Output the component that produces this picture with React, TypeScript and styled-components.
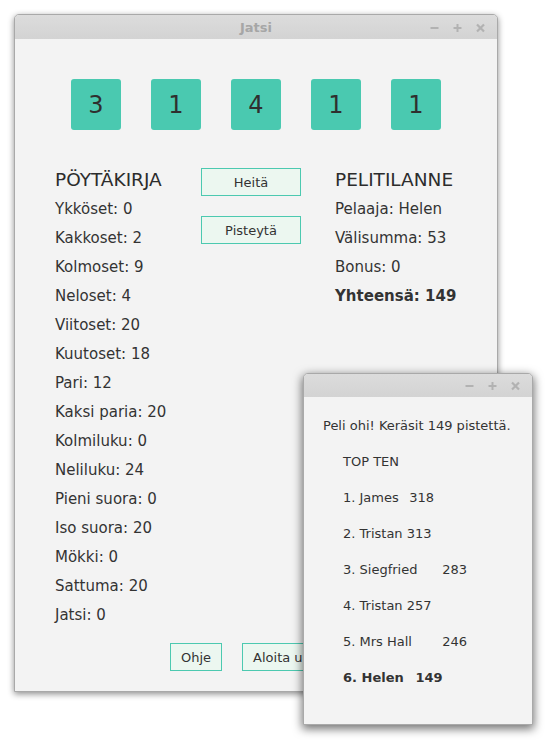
import React from "react";
import styled, { createGlobalStyle } from "styled-components";

const Global = createGlobalStyle`
  html, body { margin: 0; padding: 0; background: #ffffff; }
  body { font-family: "DejaVu Sans", "Liberation Sans", sans-serif; color: #333333; }
`;

const Desktop = styled.div`
  position: relative;
  width: 551px;
  height: 741px;
  overflow: hidden;
  background: #ffffff;
`;

const Window = styled.div<{ $left: number; $top: number; $w: number; $h: number; $strong?: boolean }>`
  position: absolute;
  left: ${(p) => p.$left}px;
  top: ${(p) => p.$top}px;
  width: ${(p) => p.$w}px;
  height: ${(p) => p.$h}px;
  box-sizing: border-box;
  display: flex;
  flex-direction: column;
  background: #f3f3f3;
  border: 1px solid #a9a9a9;
  border-radius: 5px 5px 0 0;
  box-shadow: ${(p) =>
    p.$strong
      ? "0 3px 10px 1px rgba(0,0,0,0.55)"
      : "0 2px 6px 0 rgba(0,0,0,0.45)"};
  overflow: hidden;
`;

const TitleBar = styled.div<{ $h: number }>`
  position: relative;
  flex: none;
  height: ${(p) => p.$h}px;
  background: linear-gradient(#dcdcdc, #d3d3d3);
  display: flex;
  align-items: center;
  justify-content: center;
`;

const Title = styled.span`
  font-size: 13px;
  font-weight: bold;
  color: #a6a6a6;
`;

const Controls = styled.div`
  position: absolute;
  right: 10px;
  top: 0;
  bottom: 0;
  display: flex;
  align-items: center;
  gap: 10px;
`;

const ControlIcon = styled.svg`
  width: 13px;
  height: 13px;
  display: block;
`;

const WinControls: React.FC = () => (
  <Controls>
    <ControlIcon viewBox="0 0 13 13">
      <path d="M2.5 7h8" stroke="#b2b2b2" strokeWidth="2" />
    </ControlIcon>
    <ControlIcon viewBox="0 0 13 13">
      <path d="M2.5 7h8M6.5 3v8" stroke="#b2b2b2" strokeWidth="2" />
    </ControlIcon>
    <ControlIcon viewBox="0 0 13 13">
      <path d="M3 3.5l7 7M10 3.5l-7 7" stroke="#b2b2b2" strokeWidth="2.2" />
    </ControlIcon>
  </Controls>
);

const MainBody = styled.div`
  flex: 1;
  display: flex;
  flex-direction: column;
`;

const DiceRow = styled.div`
  display: flex;
  justify-content: center;
  gap: 30px;
  margin-top: 40px;
`;

const Die = styled.div`
  width: 50px;
  height: 51px;
  border-radius: 3px;
  background: #4ac9b0;
  display: flex;
  align-items: center;
  justify-content: center;
  font-size: 24px;
  color: #2f2f2f;
`;

const Columns = styled.div`
  display: grid;
  grid-template-columns: 146px 134px 1fr;
  margin-top: 35px;
  padding-left: 40px;
`;

const Column = styled.div`
  display: flex;
  flex-direction: column;
`;

const Heading = styled.div`
  font-size: 18.5px;
  line-height: 30px;
  color: #2c2c2c;
`;

const Line = styled.div<{ $bold?: boolean }>`
  font-size: 15px;
  line-height: 29px;
  font-weight: ${(p) => (p.$bold ? "bold" : "normal")};
  color: #333333;
  white-space: nowrap;
`;

const ButtonStack = styled.div`
  display: flex;
  flex-direction: column;
  gap: 20px;
  padding-top: 3px;
`;

const Button = styled.button<{ $w?: number }>`
  box-sizing: border-box;
  height: 28px;
  width: ${(p) => (p.$w ? `${p.$w}px` : "auto")};
  padding: 0 10px;
  border: 1px solid #4cc9b0;
  border-radius: 0;
  background: #ecf7f0;
  font-family: "DejaVu Sans", "Liberation Sans", sans-serif;
  font-size: 13px;
  color: #333333;
  white-space: nowrap;
`;

const BottomBar = styled.div`
  display: flex;
  gap: 20px;
  margin-top: 13px;
  padding-left: 155px;
`;

const DialogBody = styled.div`
  padding: 11px 0 0 19px;
  display: flex;
  flex-direction: column;
`;

const DialogLine = styled.div<{ $indent?: boolean; $bold?: boolean }>`
  font-size: 13px;
  line-height: 36px;
  padding-left: ${(p) => (p.$indent ? 20 : 0)}px;
  font-weight: ${(p) => (p.$bold ? "bold" : "normal")};
  white-space: pre;
  tab-size: 8;
  color: #333333;
`;

const dice = [3, 1, 4, 1, 1];

const scores: [string, number][] = [
  ["Ykköset", 0],
  ["Kakkoset", 2],
  ["Kolmoset", 9],
  ["Neloset", 4],
  ["Viitoset", 20],
  ["Kuutoset", 18],
  ["Pari", 12],
  ["Kaksi paria", 20],
  ["Kolmiluku", 0],
  ["Neliluku", 24],
  ["Pieni suora", 0],
  ["Iso suora", 20],
  ["Mökki", 0],
  ["Sattuma", 20],
  ["Jatsi", 0],
];

const topTen: [string, number][] = [
  ["1. James", 318],
  ["2. Tristan", 313],
  ["3. Siegfried", 283],
  ["4. Tristan", 257],
  ["5. Mrs Hall", 246],
];

export default function App() {
  return (
    <>
      <Global />
      <Desktop>
        <Window $left={14} $top={14} $w={484} $h={678}>
          <TitleBar $h={24}>
            <Title>Jatsi</Title>
            <WinControls />
          </TitleBar>
          <MainBody>
            <DiceRow>
              {dice.map((d, i) => (
                <Die key={i}>{d}</Die>
              ))}
            </DiceRow>
            <Columns>
              <Column>
                <Heading>PÖYTÄKIRJA</Heading>
                {scores.map(([n, v]) => (
                  <Line key={n}>
                    {n}: {v}
                  </Line>
                ))}
              </Column>
              <ButtonStack>
                <Button $w={100}>Heitä</Button>
                <Button $w={100}>Pisteytä</Button>
              </ButtonStack>
              <Column>
                <Heading>PELITILANNE</Heading>
                <Line>Pelaaja: Helen</Line>
                <Line>Välisumma: 53</Line>
                <Line>Bonus: 0</Line>
                <Line $bold>Yhteensä: 149</Line>
              </Column>
            </Columns>
            <BottomBar>
              <Button>Ohje</Button>
              <Button>Aloita uusi peli</Button>
            </BottomBar>
          </MainBody>
        </Window>
        <Window $left={303} $top={373} $w={230} $h={352} $strong>
          <TitleBar $h={23}>
            <WinControls />
          </TitleBar>
          <DialogBody>
            <DialogLine>Peli ohi! Keräsit 149 pistettä.</DialogLine>
            <DialogLine $indent>TOP TEN</DialogLine>
            {topTen.map(([n, v]) => (
              <DialogLine $indent key={n}>
                {n.includes("Tristan") ? `${n} ${v}` : `${n}\t${v}`}
              </DialogLine>
            ))}
            <DialogLine $indent $bold>
              {"6. Helen\t149"}
            </DialogLine>
          </DialogBody>
        </Window>
      </Desktop>
    </>
  );
}
